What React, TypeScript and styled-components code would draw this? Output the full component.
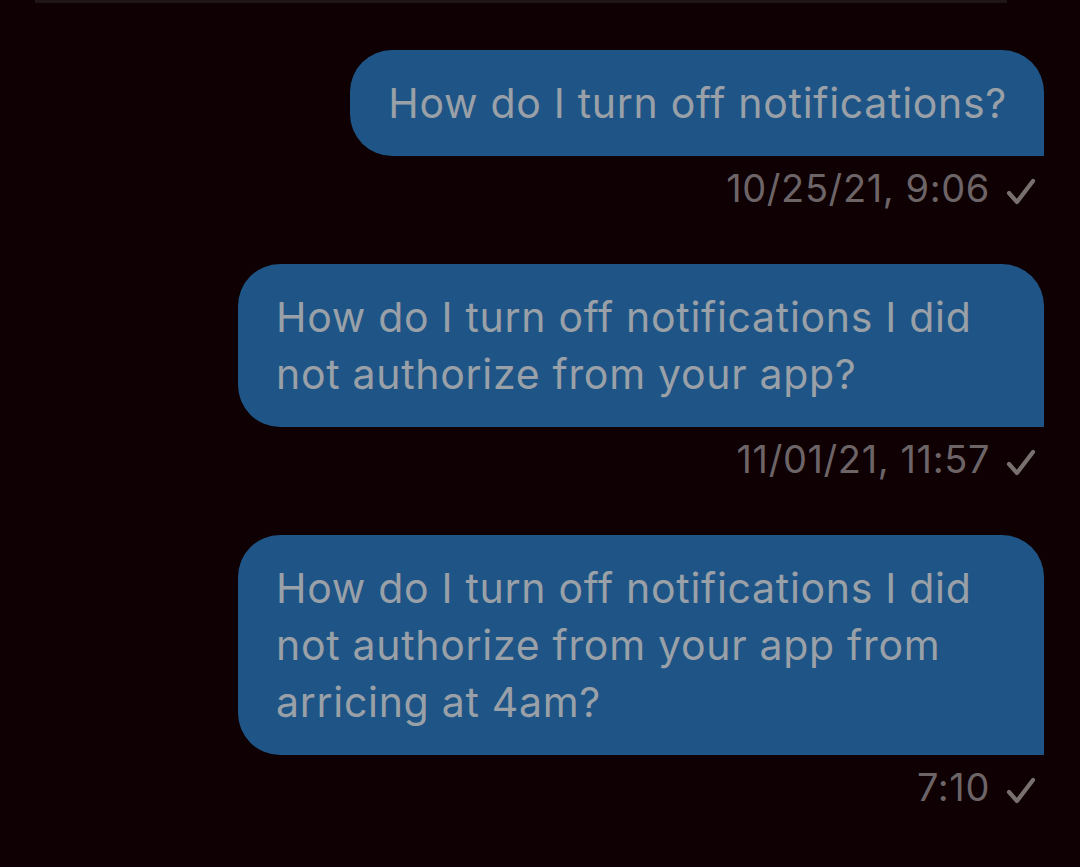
import React from 'react';
import styled, { createGlobalStyle } from 'styled-components';

const GlobalStyle = createGlobalStyle`
  html, body {
    margin: 0;
    padding: 0;
    background: #0f0003;
  }
  body {
    font-family: Inter, "Noto Sans", sans-serif;
  }
`;

const Screen = styled.div`
  width: 1080px;
  height: 867px;
  background: #0f0003;
  overflow: hidden;
  display: flex;
  flex-direction: column;
`;

const TopRule = styled.div`
  height: 3px;
  margin: 0 73px 0 35px;
  background: #1f1416;
`;

const Thread = styled.div`
  display: flex;
  flex-direction: column;
  align-items: flex-end;
  padding: 47px 36px 0 0;
  gap: 55px;
`;

const Group = styled.div`
  display: flex;
  flex-direction: column;
  align-items: flex-end;
`;

const Bubble = styled.div`
  max-width: 806px;
  box-sizing: border-box;
  padding: 25px 37px 24px 38px;
  background: #1f5586;
  border-radius: 42px 42px 0 42px;
  color: #9aa0a7;
  font-family: Inter, "Noto Sans", sans-serif;
  font-size: 41px;
  line-height: 57px;
  letter-spacing: 0.7px;
`;

const Meta = styled.div`
  display: flex;
  align-items: center;
  gap: 16px;
  margin-top: 11px;
  padding-right: 8px;
  color: #6c6467;
  font-family: Inter, "Noto Sans", sans-serif;
  font-size: 38px;
  line-height: 42px;
  letter-spacing: 0.6px;
`;

const CheckMark = styled.svg`
  margin-top: 8px;
  flex: none;
`;

const Check = () => (
  <CheckMark width="30" height="28" viewBox="0 0 30 28" fill="none">
    <path
      d="M3 15 L11 24 L27 3"
      stroke="#77706f"
      strokeWidth="4.2"
      strokeLinecap="round"
      strokeLinejoin="round"
    />
  </CheckMark>
);

const messages = [
  { text: 'How do I turn off notifications?', time: '10/25/21, 9:06' },
  {
    text: 'How do I turn off notifications I did not authorize from your app?',
    time: '11/01/21, 11:57',
  },
  {
    text: 'How do I turn off notifications I did not authorize from your app from arricing at 4am?',
    time: '7:10',
  },
];

export default function App() {
  return (
    <Screen>
      <GlobalStyle />
      <TopRule />
      <Thread>
        {messages.map((m) => (
          <Group key={m.time}>
            <Bubble>{m.text}</Bubble>
            <Meta>
              <span>{m.time}</span>
              <Check />
            </Meta>
          </Group>
        ))}
      </Thread>
    </Screen>
  );
}
